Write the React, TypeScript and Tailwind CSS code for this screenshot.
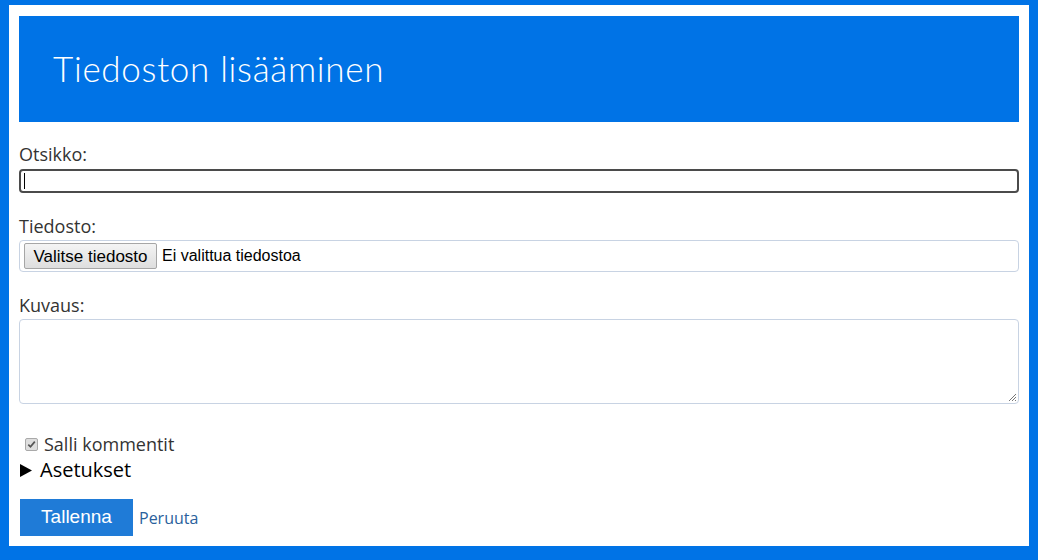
import React from 'react';

const sans = { fontFamily: '"Open Sans", "Noto Sans", sans-serif' };
const arial = { fontFamily: '"Liberation Sans", Arial, sans-serif' };

function Label({ children }: { children: React.ReactNode }) {
  return (
    <label className="block text-[18px] leading-[22px] text-[#333]" style={sans}>
      {children}
    </label>
  );
}

export default function App() {
  return (
    <div className="w-[1038px] h-[560px] bg-[#0073e6] pl-[9px] pr-[9px] pt-[5px] pb-[14px]">
      <div className="h-full bg-white px-[10px] pt-[11px]">
        {/* Header */}
        <div className="h-[106px] bg-[#0073e6] flex items-center pl-[34px]">
          <h1
            className="text-[35px] font-light text-white tracking-[0.7px] pb-[2px]"
            style={{ fontFamily: 'Lato, "Open Sans", sans-serif' }}
          >
            Tiedoston lisääminen
          </h1>
        </div>

        {/* Otsikko */}
        <div className="mt-[21px]">
          <Label>Otsikko:</Label>
          <div className="mt-[4px] h-[24px] border-2 border-[#4b4b4b] rounded-[4px] flex items-center pl-[3px]">
            <span className="w-px h-[16px] bg-black" />
          </div>
        </div>

        {/* Tiedosto */}
        <div className="mt-[22px]">
          <Label>Tiedosto:</Label>
          <div className="mt-[3px] h-[32px] border border-[#c8d3e3] rounded-[4px] flex items-center pl-[4px] gap-[5px]">
            <button
              className="h-[26px] w-[133px] border border-[#a6a6a6] rounded-[2px] bg-gradient-to-b from-[#f4f4f4] to-[#dedede] text-[17px] text-black"
              style={arial}
            >
              Valitse tiedosto
            </button>
            <span className="text-[16px] text-black" style={arial}>
              Ei valittua tiedostoa
            </span>
          </div>
        </div>

        {/* Kuvaus */}
        <div className="mt-[22px]">
          <Label>Kuvaus:</Label>
          <div className="relative mt-[3px] h-[85px] border border-[#c8d3e3] rounded-[4px]">
            <svg className="absolute right-[1px] bottom-[1px]" width="10" height="10" viewBox="0 0 10 10">
              <path d="M9 2 L2 9 M9 5 L5 9 M9 8 L8 9" stroke="#777" strokeWidth="1" />
            </svg>
          </div>
        </div>

        {/* Checkbox */}
        <div className="mt-[29px] flex items-center pl-[6px] gap-[6px]">
          <span className="w-[13px] h-[13px] rounded-[2px] border border-[#a9a9a9] bg-[#dedede] flex items-center justify-center">
            <svg width="9" height="9" viewBox="0 0 9 9">
              <path d="M1.3 4.6 L3.5 6.8 L7.8 1.6" stroke="#555" strokeWidth="1.7" fill="none" />
            </svg>
          </span>
          <span className="text-[18px] leading-[22px] text-[#333]" style={sans}>
            Salli kommentit
          </span>
        </div>

        {/* Asetukset */}
        <div className="mt-[2px] flex items-center pl-[1px] gap-[8px] h-[26px]">
          <svg width="12" height="13" viewBox="0 0 12 13">
            <path d="M0 0 L12 6.5 L0 13 Z" fill="#000" />
          </svg>
          <span className="text-[20px] leading-[26px] text-black" style={sans}>
            Asetukset
          </span>
        </div>

        {/* Actions */}
        <div className="mt-[16px] flex items-center gap-[6px] pl-[1px]">
          <button
            className="h-[37px] w-[113px] bg-[#1f7bd7] text-white text-[19px]"
            style={arial}
          >
            Tallenna
          </button>
          <a className="text-[16px] text-[#2a5f9c]" style={sans}>
            Peruuta
          </a>
        </div>
      </div>
    </div>
  );
}
